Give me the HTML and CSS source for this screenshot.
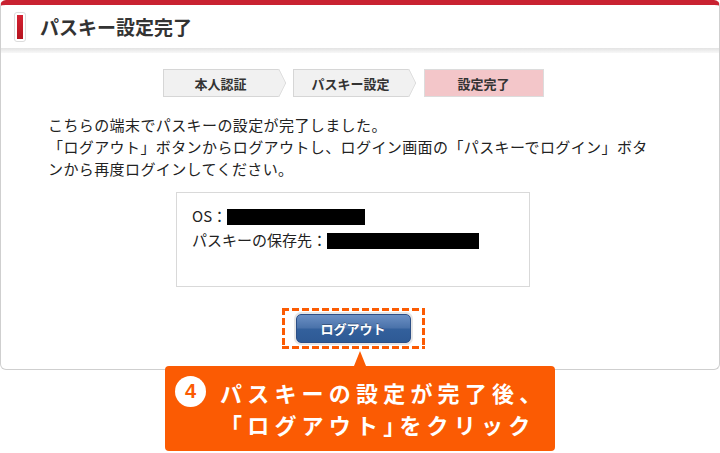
FILE: index.html
```html
<!DOCTYPE html>
<html lang="ja">
<head>
    <meta charset="UTF-8">
    <meta name="viewport" content="width=device-width, initial-scale=1.0">
    <title>パスキー設定完了</title>
    <link rel="stylesheet" href="styles.css">
</head>
<body>
    <div class="panel">
        <div class="panel-head">
            <span class="head-mark"></span>
            <h1>パスキー設定完了</h1>
        </div>
        <div class="head-rule"></div>
        <div class="panel-body">
            <ol class="steps">
                <li class="step">本人認証</li>
                <li class="step">パスキー設定</li>
                <li class="step current">設定完了</li>
            </ol>
            <p class="message">こちらの端末でパスキーの設定が完了しました。<br>「ログアウト」ボタンからログアウトし、ログイン画面の「パスキーでログイン」ボタンから再度ログインしてください。</p>
            <div class="device-info">
                <p>OS：<span class="masked os"></span></p>
                <p>パスキーの保存先：<span class="masked store"></span></p>
            </div>
            <div class="logout-area">
                <span class="highlight">
                    <button type="button" class="logout">ログアウト</button>
                </span>
            </div>
        </div>
    </div>

    <div class="callout">
        <span class="step-num">4</span>
        <p class="callout-text">パスキーの設定が完了後、<br>「ログアウト<span class="half">」</span>をクリック</p>
    </div>
</body>
</html>
```

FILE: styles.css
```css
body {
    margin: 0;
    background-color: #fff;
    font-family: "Noto Sans CJK JP", "Noto Sans", sans-serif;
    color: #222;
}
.panel {
    width: 720px;
    box-sizing: border-box;
    border: 1px solid #cfcfcf;
    border-top: 5px solid #c92231;
    border-radius: 6px;
    background-color: #fff;
}
.panel-head {
    display: flex;
    align-items: center;
    gap: 14px;
    height: 43px;
    padding-left: 13px;
}
.head-mark {
    width: 12px;
    height: 30px;
    box-sizing: border-box;
    border: 1px solid #dcdcdc;
    border-radius: 3px;
    padding: 2px;
    background: linear-gradient(#d52232, #b5141f) content-box;
}
h1 {
    margin: 0;
    font-size: 19px;
    font-weight: 700;
    color: #333;
}
.head-rule {
    height: 5px;
    background: linear-gradient(#e3e3e3, #f8f8f8);
}
.panel-body {
    padding: 16px 61px 20px 47px;
}
.steps {
    list-style: none;
    margin: 0;
    padding: 0;
    display: flex;
    justify-content: center;
    gap: 14px;
}
.step {
    position: relative;
    box-sizing: border-box;
    width: 116px;
    height: 28px;
    border: 1px solid #d6d6d6;
    background-color: #f1f1f1;
    display: flex;
    align-items: center;
    justify-content: center;
    font-size: 13px;
    font-weight: 700;
    color: #333;
}
.step::after {
    content: "";
    position: absolute;
    top: 3px;
    right: -11px;
    width: 20px;
    height: 20px;
    box-sizing: border-box;
    border-top: 1px solid #d6d6d6;
    border-right: 1px solid #d6d6d6;
    background-color: #f1f1f1;
    transform: scaleX(0.5) rotate(45deg);
}
.step.current {
    width: 120px;
    margin-left: 1px;
    background-color: #f3c6c9;
    border-color: #dcdcdc;
}
.step.current::after {
    display: none;
}
.message {
    margin: 17px 0 0;
    font-size: 15px;
    line-height: 22px;
    letter-spacing: 0.4px;
    color: #222;
}
.device-info {
    width: 354px;
    height: 95px;
    box-sizing: border-box;
    margin: 12px auto 0;
    padding: 11px 15px;
    border: 1px solid #d9d9d9;
    font-size: 15px;
    line-height: 24px;
    color: #222;
}
.device-info p {
    margin: 0;
}
.masked {
    display: inline-block;
    height: 16px;
    background-color: #000;
    vertical-align: -3px;
}
.masked.os {
    width: 138px;
}
.masked.store {
    width: 152px;
}
.logout-area {
    display: flex;
    justify-content: center;
    margin-top: 21px;
}
.highlight {
    display: block;
    padding: 6px 14px;
    background:
        repeating-linear-gradient(90deg, #fb5b03 0 7px, transparent 7px 10px) top left / 100% 3px no-repeat,
        repeating-linear-gradient(90deg, #fb5b03 0 7px, transparent 7px 10px) bottom left / 100% 3px no-repeat,
        repeating-linear-gradient(180deg, #fb5b03 0 7px, transparent 7px 10px) top left / 3px 100% no-repeat,
        repeating-linear-gradient(180deg, #fb5b03 0 7px, transparent 7px 10px) top right / 3px 100% no-repeat;
}
.logout {
    display: block;
    width: 115px;
    height: 29px;
    border: 1px solid #2c4f86;
    border-radius: 5px;
    background: linear-gradient(#6c90c4, #4a72aa 48%, #33609c 52%, #2e5a95);
    box-shadow: 0 0 0 2px #e6e6e6;
    font-family: "Noto Sans CJK JP", sans-serif;
    font-size: 13px;
    font-weight: 700;
    color: #fff;
    text-shadow: 0 -1px 0 rgba(0, 0, 0, 0.3);
    cursor: pointer;
}
.callout {
    position: relative;
    display: flex;
    gap: 14px;
    width: 390px;
    box-sizing: border-box;
    margin: -4px auto 0;
    padding: 10px 0 11px 10px;
    border-radius: 4px;
    background-color: #fb5b03;
    color: #fff;
}
.callout::before {
    content: "";
    position: absolute;
    left: 50%;
    top: -15px;
    margin-left: -6px;
    border-left: 6px solid transparent;
    border-right: 6px solid transparent;
    border-bottom: 15px solid #fb5b03;
}
.step-num {
    flex: none;
    width: 31px;
    height: 31px;
    border-radius: 50%;
    background-color: #fff;
    color: #fb5b03;
    font-family: "Liberation Sans", sans-serif;
    font-size: 20px;
    font-weight: 700;
    line-height: 31px;
    text-align: center;
}
.callout-text {
    margin: 0;
    font-size: 22px;
    font-weight: 700;
    line-height: 32px;
    letter-spacing: 5.2px;
    white-space: nowrap;
}
.callout-text .half {
    font-feature-settings: "halt";
}
```
